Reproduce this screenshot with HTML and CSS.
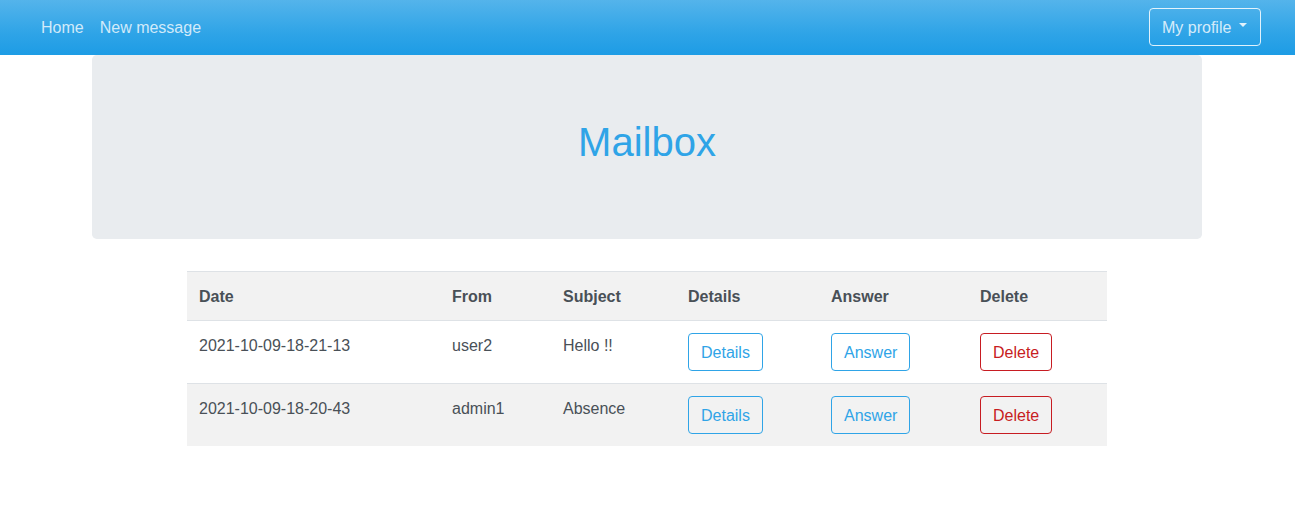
FILE: index.html
```html
<!DOCTYPE html>
<html lang="en">
<head>
<meta charset="utf-8">
<title>Mailbox</title>
<link rel="stylesheet" href="styles.css">
</head>
<body>
<nav class="navbar">
  <div class="nav-inner">
    <ul class="nav-links">
      <li><a class="nav-link" href="#">Home</a></li>
      <li><a class="nav-link" href="#">New message</a></li>
    </ul>
    <button class="btn-profile" type="button">My profile <span class="caret"></span></button>
  </div>
</nav>
<main class="container">
  <section class="jumbotron">
    <h1 class="title">Mailbox</h1>
  </section>
  <div class="table-wrap">
    <table class="mail-table">
      <colgroup>
        <col class="c-date"><col class="c-from"><col class="c-subject"><col class="c-details"><col class="c-answer"><col class="c-delete">
      </colgroup>
      <tbody>
        <tr class="head-row">
          <th>Date</th><th>From</th><th>Subject</th><th>Details</th><th>Answer</th><th>Delete</th>
        </tr>
        <tr>
          <td>2021-10-09-18-21-13</td><td>user2</td><td>Hello !!</td>
          <td><button class="btn btn-primary-outline">Details</button></td>
          <td><button class="btn btn-primary-outline">Answer</button></td>
          <td><button class="btn btn-danger-outline">Delete</button></td>
        </tr>
        <tr>
          <td>2021-10-09-18-20-43</td><td>admin1</td><td>Absence</td>
          <td><button class="btn btn-primary-outline">Details</button></td>
          <td><button class="btn btn-primary-outline">Answer</button></td>
          <td><button class="btn btn-danger-outline">Delete</button></td>
        </tr>
      </tbody>
    </table>
  </div>
</main>
</body>
</html>
```

FILE: styles.css
```css
* { box-sizing: border-box; }
html, body { margin: 0; padding: 0; }
body {
  font-family: "Liberation Sans", Arial, Helvetica, sans-serif;
  font-size: 16px;
  line-height: 1.5;
  color: #495057;
  background: #fff;
}
.navbar {
  height: 55px;
  background-image: linear-gradient(#54b4eb, #2fa4e7 60%, #1d9ce5);
  padding: 8px 34px 8px 33px;
}
.nav-inner {
  display: flex;
  align-items: center;
  justify-content: space-between;
  height: 38px;
}
.nav-links {
  list-style: none;
  margin: 0;
  padding: 0;
  display: flex;
}
.nav-link {
  display: block;
  padding: 9px 8px 7px;
  color: rgba(255, 255, 255, 0.78);
  text-decoration: none;
  line-height: 24px;
}
.btn-profile {
  font-family: inherit;
  font-size: 16px;
  line-height: 24px;
  height: 38px;
  width: 112px;
  padding: 7px 12px 5px;
  background: transparent;
  color: rgba(255, 255, 255, 0.8);
  border: 1px solid rgba(255, 255, 255, 0.85);
  border-radius: 4px;
  display: flex;
  align-items: center;
  white-space: nowrap;
}
.caret {
  display: inline-block;
  margin-left: 8px;
  margin-top: -6px;
  border-top: 4.8px solid rgba(255, 255, 255, 0.85);
  border-left: 4.8px solid transparent;
  border-right: 4.8px solid transparent;
}
.container {
  width: 1141px;
  margin: 0 auto;
  padding: 0 16px 0 15px;
}
.jumbotron {
  background: #e9ecef;
  border-radius: 4.8px;
  padding: 63px 32px 65px;
  margin-bottom: 32px;
  text-align: center;
}
.title {
  margin: 0 0 8px;
  font-size: 40px;
  font-weight: 400;
  line-height: 1.2;
  color: #2fa4e7;
}
.table-wrap {
  width: 920px;
  margin: 0 auto;
}
.mail-table {
  width: 920px;
  border-collapse: collapse;
  table-layout: fixed;
}
.c-date { width: 253px; }
.c-from { width: 111px; }
.c-subject { width: 125px; }
.c-details { width: 143px; }
.c-answer { width: 149px; }
.c-delete { width: 139px; }
.mail-table th,
.mail-table td {
  padding: 13px 12px 11px;
  border-top: 1px solid #dee2e6;
  text-align: left;
  vertical-align: top;
  line-height: 24px;
}
.mail-table td:nth-child(n+4) { padding-top: 12px; padding-bottom: 12px; }
.mail-table th { font-weight: 700; }
.mail-table tr:nth-child(odd) { background: rgba(0, 0, 0, 0.05); }
.btn {
  font-family: inherit;
  font-size: 16px;
  line-height: 24px;
  padding: 7px 12px 5px;
  background: transparent;
  border: 1px solid;
  border-radius: 4px;
  display: inline-block;
}
.btn-primary-outline { color: #2fa4e7; border-color: #2fa4e7; }
.btn-danger-outline { color: #c71c22; border-color: #c71c22; }
```
